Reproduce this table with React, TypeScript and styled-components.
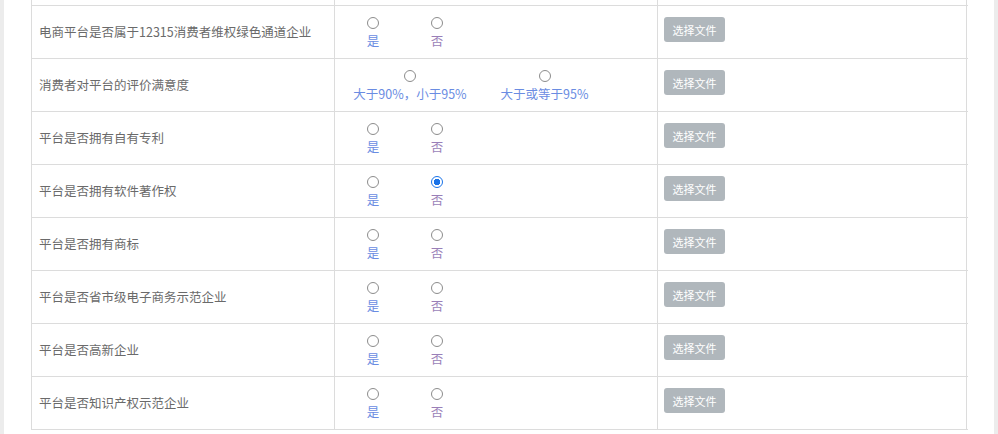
import React from "react";
import styled, { createGlobalStyle } from "styled-components";

const GlobalStyle = createGlobalStyle`
  html, body {
    margin: 0;
    padding: 0;
    background: #ececec;
  }
  body {
    font-family: "Noto Sans CJK SC", "Noto Sans", sans-serif;
  }
`;

type Option = { text: string; width: number };

type Row = {
  title: string;
  options: Option[];
  checked?: number;
};

const yesNo: Option[] = [
  { text: "是", width: 64 },
  { text: "否", width: 64 },
];

const rows: Row[] = [
  { title: "电商平台是否属于12315消费者维权绿色通道企业", options: yesNo },
  {
    title: "消费者对平台的评价满意度",
    options: [
      { text: "大于90%，小于95%", width: 138 },
      { text: "大于或等于95%", width: 131 },
    ],
  },
  { title: "平台是否拥有自有专利", options: yesNo },
  { title: "平台是否拥有软件著作权", options: yesNo, checked: 1 },
  { title: "平台是否拥有商标", options: yesNo },
  { title: "平台是否省市级电子商务示范企业", options: yesNo },
  { title: "平台是否高新企业", options: yesNo },
  { title: "平台是否知识产权示范企业", options: yesNo },
];

function App() {
  return (
    <>
      <GlobalStyle />
      <Page>
        <Panel>
          <Table>
            <TableRow $height={5}>
              <Cell />
              <Cell />
              <Cell />
            </TableRow>
            {rows.map((row, i) => (
              <TableRow key={i} $height={52}>
                <LabelCell>{row.title}</LabelCell>
                <OptionCell>
                  {row.options.map((opt, j) => (
                    <OptionItem key={j} style={{ width: opt.width }}>
                      <Radio
                        type="radio"
                        name={`r${i}`}
                        defaultChecked={row.checked === j}
                      />
                      <OptionText $no={row.options === yesNo && j === 1}>
                        {opt.text}
                      </OptionText>
                    </OptionItem>
                  ))}
                </OptionCell>
                <FileCell>
                  <FileButton>选择文件</FileButton>
                </FileCell>
              </TableRow>
            ))}
          </Table>
        </Panel>
      </Page>
    </>
  );
}

const Page = styled.div`
  padding: 0 4px;
  height: 434px;
  overflow: hidden;
`;

const Panel = styled.div`
  background: #fff;
  height: 100%;
  padding-left: 27px;
`;

const Table = styled.div`
  width: 936px;
  border-left: 1px solid #dcdcdc;
`;

const TableRow = styled.div<{ $height: number }>`
  display: grid;
  grid-template-columns: 303px 323px 309px;
  height: ${(p) => p.$height}px;
  border-bottom: 1px solid #dcdcdc;
`;

const Cell = styled.div`
  border-right: 1px solid #dcdcdc;
  min-width: 0;
`;

const LabelCell = styled(Cell)`
  display: flex;
  align-items: center;
  padding: 0 0 2px 7px;
  font-size: 12.5px;
  color: #6a6a6a;
  white-space: nowrap;
`;

const OptionCell = styled(Cell)`
  display: flex;
  align-items: flex-start;
  padding: 11px 0 0 6px;
`;

const OptionItem = styled.label`
  display: flex;
  flex-direction: column;
  align-items: center;
  cursor: pointer;
`;

const Radio = styled.input`
  appearance: none;
  margin: 0;
  width: 12px;
  height: 12px;
  border: 1px solid #8c8c8c;
  border-radius: 50%;
  background: #fff;
  box-sizing: border-box;

  &:checked {
    border-color: #1a73e8;
    background: radial-gradient(circle, #1a73e8 0 3px, #fff 3.5px);
  }
`;

const OptionText = styled.span<{ $no?: boolean }>`
  margin-top: 3px;
  font-size: 12.5px;
  line-height: 18px;
  color: ${(p) => (p.$no ? "#9a7fb8" : "#6a8ce2")};
  white-space: nowrap;
`;

const FileCell = styled(Cell)`
  display: flex;
  align-items: flex-start;
  padding: 11px 0 0 6px;
`;

const FileButton = styled.button`
  width: 61px;
  height: 25px;
  border: none;
  border-radius: 3px;
  background: #b0b7bc;
  color: #fff;
  font-family: "Noto Sans CJK SC", sans-serif;
  font-size: 11px;
  padding: 0;
  cursor: pointer;
`;

export default App;
